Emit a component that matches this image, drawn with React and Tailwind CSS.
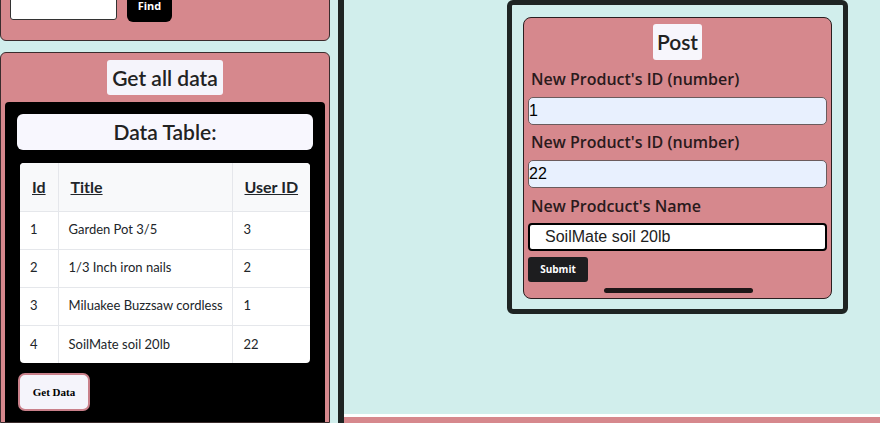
import { useState } from "react";

const rows = [
  { id: 1, title: "Garden Pot 3/5", userId: 3 },
  { id: 2, title: "1/3 Inch iron nails", userId: 2 },
  { id: 3, title: "Miluakee Buzzsaw cordless", userId: 1 },
  { id: 4, title: "SoilMate soil 20lb", userId: 22 },
];

function DataTable() {
  return (
    <div className="ml-[15px] mr-[15px] mt-[13px] bg-white rounded-[4px] overflow-hidden">
      <table className="w-full border-collapse text-[13px] text-[#212529]" style={{ fontFamily: "Lato, sans-serif" }}>
        <thead>
          <tr className="bg-[#f8f9fa] h-[48px] text-[16px] font-bold">
            <th className="w-[38px] text-left pl-[12px] underline border-r border-[#e5e7eb]">Id</th>
            <th className="w-[174px] text-left pl-[12px] underline border-r border-[#e5e7eb]">Title</th>
            <th className="text-left pl-[12px] underline">User ID</th>
          </tr>
        </thead>
        <tbody>
          {rows.map((r) => (
            <tr key={r.id} className="h-[38px] border-t border-[#e5e7eb]">
              <td className="pl-[10px] border-r border-[#e5e7eb]">{r.id}</td>
              <td className="pl-[10px] border-r border-[#e5e7eb]">{r.title}</td>
              <td className="pl-[11px]">{r.userId}</td>
            </tr>
          ))}
        </tbody>
      </table>
    </div>
  );
}

function PostForm() {
  const [id, setId] = useState("1");
  const [userId, setUserId] = useState("22");
  const [name, setName] = useState("SoilMate soil 20lb");

  const label = "block pl-[3px] text-[16px] font-semibold text-[#2a1a1c] leading-[20px]";
  const input = "block w-full h-[28px] rounded-[5px] bg-[#e8f0fe] border border-[#6b5b5d] px-0 text-[16px] text-black outline-none";

  return (
    <div className="ml-[163px] w-[341px] h-[314px] border-[5px] border-[#1e2423] rounded-[6px] pt-[12px] px-[11px]">
      <div className="h-[282px] bg-[#d6888d] border border-[#2a1f20] rounded-[8px] px-[4px] pt-[6px] flex flex-col">
        <div className="self-center bg-[#f7f6fc] rounded-[3px] px-[4px] h-[36px] flex items-center text-[21px] font-semibold text-[#222]" style={{ fontFamily: "Lato, sans-serif" }}>
          Post
        </div>
        <div className="mt-[9px]" style={{ fontFamily: "'Open Sans', sans-serif" }}>
          <span className={label}>New Product's ID (number)</span>
        </div>
        <input value={id} onChange={(e) => setId(e.target.value)} className={"mt-[8px] " + input} style={{ fontFamily: "'Liberation Sans', Arial, sans-serif" }} />
        <div className="mt-[7px]" style={{ fontFamily: "'Open Sans', sans-serif" }}>
          <span className={label}>New Product's ID (number)</span>
        </div>
        <input value={userId} onChange={(e) => setUserId(e.target.value)} className={"mt-[8px] " + input} style={{ fontFamily: "'Liberation Sans', Arial, sans-serif" }} />
        <div className="mt-[8px]" style={{ fontFamily: "'Open Sans', sans-serif" }}>
          <span className={label}>New Prodcuct's Name</span>
        </div>
        <input value={name} onChange={(e) => setName(e.target.value)} className="mt-[7px] block w-full h-[28px] rounded-[4px] bg-white border-2 border-black pl-[15px] text-[16px] text-[#222] outline-none" style={{ fontFamily: "'Liberation Sans', Arial, sans-serif" }} />
        <button className="mt-[6px] self-start w-[60px] h-[25px] rounded-[3px] bg-[#1d1d1f] text-white text-[10px] font-bold" style={{ fontFamily: "'Open Sans', sans-serif" }}>
          Submit
        </button>
        <div className="mt-[6px] self-center ml-[1px] w-[149px] h-[5px] rounded-full bg-[#1e1718]" />
      </div>
    </div>
  );
}

export default function App() {
  const [query, setQuery] = useState("");

  return (
    <div className="h-[423px] w-[880px] overflow-hidden bg-[#d1eeec] flex">
      <div className="w-[330px] shrink-0 flex flex-col gap-[11px] -mt-[20px]">
        <div className="h-[61px] bg-[#d6888d] border border-[#3a2c2d] rounded-b-[6px] flex items-start pl-[9px] gap-[10px]">
          <input value={query} onChange={(e) => setQuery(e.target.value)} className="w-[107px] h-[39px] bg-white border border-[#333] rounded-[3px] outline-none" />
          <button className="w-[45px] h-[42px] -mt-[1px] bg-black rounded-[6px] text-white text-[11px] font-bold pt-[10px]" style={{ fontFamily: "'Open Sans', sans-serif" }}>
            Find
          </button>
        </div>
        <div className="flex-1 bg-[#d6888d] border border-[#3a2c2d] rounded-t-[6px] pt-[7px] flex flex-col">
          <div className="self-center bg-[#f5f4fb] rounded-[3px] px-[5px] h-[35px] flex items-center text-[21px] font-semibold text-[#222]" style={{ fontFamily: "Lato, sans-serif" }}>
            Get all data
          </div>
          <div className="mt-[7px] mx-[4px] flex-1 bg-black rounded-t-[4px] pt-[12px]">
            <div className="mx-[12px] h-[36px] rounded-[6px] bg-[#f8f7fe] flex items-center justify-center text-[21px] font-semibold text-[#222]" style={{ fontFamily: "Lato, sans-serif" }}>
              Data Table:
            </div>
            <DataTable />
            <button className="mt-[10px] ml-[13px] w-[72px] h-[38px] rounded-[7px] bg-[#f5f4fb] border-2 border-[#c9808a] text-[11px] font-bold text-black" style={{ fontFamily: "'Liberation Serif', serif" }}>
              Get Data
            </button>
          </div>
        </div>
      </div>
      <div className="w-[8px] shrink-0" />
      <div className="flex-1 flex flex-col border-l-[6px] border-[#1e2423]">
        <div className="flex-1">
          <PostForm />
        </div>
        <div className="h-[3px] bg-white" />
        <div className="h-[6px] bg-[#d6888d]" />
      </div>
    </div>
  );
}
